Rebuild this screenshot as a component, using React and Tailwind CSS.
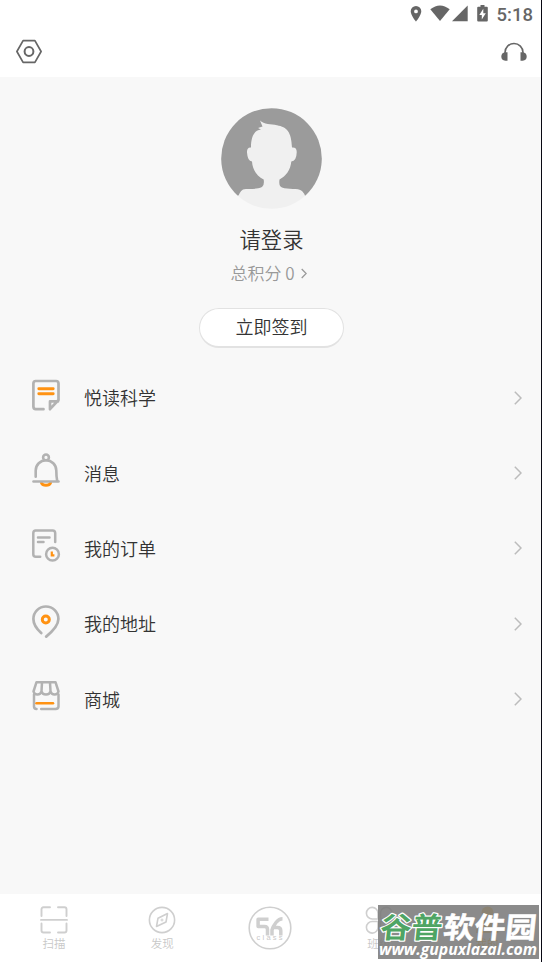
import React, { useState } from "react";

const menuItems = [
  { id: "reading", label: "悦读科学", Icon: NoteIcon },
  { id: "message", label: "消息", Icon: BellIcon },
  { id: "orders", label: "我的订单", Icon: OrderIcon },
  { id: "address", label: "我的地址", Icon: PinIcon },
  { id: "mall", label: "商城", Icon: ShopIcon },
];

function StatusBar() {
  return (
    <div className="flex h-[27px] items-center justify-end pr-[9px] text-[#666]">
      <svg className="mr-[8px] h-[17px] w-[12px]" viewBox="0 0 11 17" fill="currentColor">
        <path
          fillRule="evenodd"
          d="M5.5 1A5.3 5.3 0 0 0 .2 6.300C.2 10.200 5.500 16.700 5.500 16.700S10.800 10.200 10.800 6.300A5.300 5.300 0 0 0 5.500 1Zm0 3.500a1.900 1.900 0 1 1 0 3.800 1.900 1.900 0 0 1 0-3.800Z"
        />
      </svg>
      <svg className="mr-[2px] h-[17px] w-[20px]" viewBox="0 0 20 17" fill="currentColor">
        <path d="M.3 4.300Q10-3.300 19.700 4.300L10 16Z" />
      </svg>
      <svg className="mr-[9px] h-[17px] w-[16px]" viewBox="0 0 16 17" fill="currentColor">
        <path d="M15.700.500V16.200H0Z" />
      </svg>
      <svg className="mr-[9px] h-[17px] w-[11px]" viewBox="0 0 11 17" fill="currentColor">
        <path
          fillRule="evenodd"
          d="M3.500 0h4v1.700h2.300q1 0 1 1v12.800q0 1-1 1H1.200q-1 0-1-1V2.700q0-1 1-1h2.300ZM6.300 3.800 2.300 10h2.500v4.500L8.800 8.300H6.300Z"
        />
      </svg>
      <span className="pt-[3px] font-[Roboto,sans-serif] text-[18.5px] leading-none font-medium">5:18</span>
    </div>
  );
}

function Header() {
  return (
    <header className="h-[77px] bg-white">
      <StatusBar />
      <div className="flex h-[50px] items-center justify-between pr-[15px] pl-4 text-[#666]">
        <button>
          <svg className="h-[26px] w-[26px]" viewBox="0 0 26 26" fill="none" stroke="currentColor" strokeWidth="1.7" strokeLinejoin="round">
            <path d="M7.100 1.700h11.800L25.100 12.500l-6.200 10.800H7.100L.900 12.500Z" />
            <circle cx="13" cy="12.500" r="4.400" strokeWidth="2" />
          </svg>
        </button>
        <button>
          <svg className="h-[26px] w-[26px]" viewBox="0 0 26 26">
            <path d="M4 16V13.500a9 9 0 0 1 18 0V16" fill="none" stroke="currentColor" strokeWidth="1.600" />
            <path d="M6.500 13.200v8.500H4.300Q.300 21.200.300 17.500T4.300 13.200ZM19.500 13.200v8.500h2.200q4-.500 4-4.200t-4-4.300Z" fill="currentColor" />
          </svg>
        </button>
      </div>
    </header>
  );
}

function Avatar() {
  return (
    <svg className="h-[101px] w-[101px]" viewBox="0 0 101 101">
      <defs>
        <clipPath id="avatarClip">
          <circle cx="50.500" cy="50.500" r="50.300" />
        </clipPath>
      </defs>
      <path d="M16.500 87.500A50.300 50.300 0 1 1 84.500 87.500Z" fill="#9b9b9b" />
      <path
        clipPath="url(#avatarClip)"
        fill="#f0f0f0"
        d="M39 12.500C43 16.500 50 16 56 17.200C66 19 70.500 24 71 39.500Q76 39 75.700 44.500Q75.500 53 70.300 53.500C69.500 62 65 68 58.500 71.500Q57.500 78 61 79.500C67 82 77 79.500 81 83Q84 85.500 84.500 90V101H17V90Q18 84 22 81.500C27 80 36 82 41 79Q43.500 77.500 42.700 71.500C36 68 31.500 62 31 53.500Q26.500 53 26 44.500Q25.800 39 30 39.500C30 29 33 22 40 21.500L37 20L41.500 18.500Z"
      />
    </svg>
  );
}

function NoteIcon() {
  return (
    <svg className="h-8 w-7" viewBox="0 0 28 32" fill="none" stroke="#b2b2b2" strokeWidth="2.700" strokeLinecap="round" strokeLinejoin="round">
      <path d="M11.500 30.200H3.800Q1.400 30.200 1.400 27.600V4.600Q1.400 2 3.800 2H24Q26.500 2 26.500 4.600V21L18 30.200V22.400H26" />
      <path d="M6.800 9.700H21.200M6.800 14.700H21.200" stroke="#ff9212" strokeWidth="2.900" />
    </svg>
  );
}

function BellIcon() {
  return (
    <svg className="h-8 w-7 overflow-visible" viewBox="0 0 28 32" fill="none" stroke="#b2b2b2" strokeWidth="2.600" strokeLinecap="round">
      <path d="M9.500 29Q10.500 31.300 14 31.300T18.500 29" stroke="#ff9212" strokeWidth="3" />
      <path d="M3.700 22.700V16.500A10.300 10.300 0 0 1 24.300 16.500Q24.300 22.500 25.200 27" />
      <circle cx="14" cy="3.400" r="2.900" />
      <path d="M1.500 27.500H26.500" />
    </svg>
  );
}

function OrderIcon() {
  return (
    <svg className="h-8 w-7 overflow-visible" viewBox="0 0 28 32" fill="none" stroke="#b2b2b2" strokeWidth="2.500" strokeLinecap="round">
      <path d="M8.200 27.800H3.800Q1.300 27.800 1.300 25.300V4.100Q1.300 1.500 3.800 1.500H20.500Q23.200 1.500 23.200 4.100V13" />
      <path d="M6 8.600H17.500M6 13H11.500" />
      <circle cx="20.500" cy="25.200" r="6.400" />
      <path d="M19.800 22.500V26.400H22.400" stroke="#ff9212" strokeWidth="2.200" strokeLinecap="butt" />
    </svg>
  );
}

function PinIcon() {
  return (
    <svg className="h-[34px] w-7" viewBox="0 0 28 34" fill="none" stroke="#b2b2b2" strokeWidth="2.700" strokeLinecap="round">
      <path d="M9.200 29Q1.400 22 1.400 15A12.500 12.500 0 0 1 26.400 15Q26.400 22.500 14.200 32.600" />
      <circle cx="13.800" cy="15.500" r="3.500" stroke="#ff9212" strokeWidth="3" />
    </svg>
  );
}

function ShopIcon() {
  return (
    <svg className="h-8 w-7" viewBox="0 0 28 32" fill="none" stroke="#b2b2b2" strokeWidth="2.500" strokeLinecap="round" strokeLinejoin="round">
      <path d="M4.500 2.200H23.500L26.500 11.500Q25.500 14.700 22.500 14.500Q19.500 14.300 18.500 11.300Q17.800 14.500 14 14.500T9.500 11.300Q8.500 14.300 5.500 14.500Q2.500 14.700 1.500 11.500ZM10 2.500 9.500 11.300M18 2.500 18.500 11.300" />
      <path d="M2 14.500V26.500Q2 28.900 4.500 28.900M9.200 28.900H23.500Q26.500 28.900 26.500 26.500V14.500" />
      <path d="M4.500 23.200H21" stroke="#ff9212" strokeWidth="2.500" />
    </svg>
  );
}

function ScanIcon() {
  return (
    <svg className="h-7 w-7" viewBox="0 0 28 28" fill="none" stroke="#cfcfcf" strokeWidth="1.900" strokeLinecap="round">
      <path d="M1.500 10V3.300Q1.500 1.300 3.500 1.300H10M18 1.300H24.500Q26.500 1.300 26.500 3.300V10M26.500 17.500V24.500Q26.500 26.500 24.500 26.500H18M10 26.500H3.500Q1.500 26.500 1.500 24.500V17.500M1 13.900H27" />
    </svg>
  );
}

function CompassIcon() {
  return (
    <svg className="h-7 w-7" viewBox="0 0 28 28" fill="none" stroke="#cfcfcf" strokeWidth="1.600" strokeLinejoin="round">
      <circle cx="14" cy="14" r="12.600" />
      <path d="M19.500 7.500 18 16 8.500 20.500 10 12.200Z" />
      <circle cx="14" cy="14" r="1" strokeWidth="1" />
    </svg>
  );
}

function CloverIcon() {
  return (
    <svg className="h-7 w-7" viewBox="0 0 28 28" fill="none" stroke="#cfcfcf" strokeWidth="1.600">
      <path d="M13 13H7.500A5.800 5.800 0 1 1 13 7.500ZM15.500 13V7.500A5.800 5.800 0 1 1 21 13ZM13 15.500V21A5.800 5.800 0 1 1 7.500 15.500ZM15.500 15.500H21A5.800 5.800 0 1 1 15.500 21Z" />
    </svg>
  );
}

function UserIcon() {
  return (
    <svg className="h-7 w-7" viewBox="0 0 28 28" fill="#ffc95c">
      <circle cx="14.500" cy="6.500" r="6" />
      <path d="M14 12.500 19 15Q25 18 25.500 27H3Q3.500 18 9.500 15Z" />
    </svg>
  );
}

// Round "56 class" badge in the middle of the tab bar
function ClassLogo() {
  return (
    <svg className="h-11 w-11" viewBox="0 0 44 44" fill="none" stroke="#cfcfcf">
      <circle cx="22" cy="22" r="20.800" strokeWidth="1.600" />
      <path d="M20.500 13.200H10.100V20.500H16.500Q19.500 20.500 19.500 23.500V29.500" strokeWidth="3.500" strokeLinejoin="round" />
      <path d="M34.500 12.800Q31 12.800 28 16.500T24 24V29.500M25 21.500H29.500Q32.800 21.500 32.800 24.800V29.500" strokeWidth="3.500" />
      <text x="8.500" y="34" fontSize="7.500" textLength="26" fill="#c8c8c8" stroke="none" className="font-[Liberation_Sans,sans-serif]">
        class
      </text>
    </svg>
  );
}

const tabs = [
  { id: "scan", label: "扫描", Icon: ScanIcon },
  { id: "discover", label: "发现", Icon: CompassIcon },
  { id: "home", label: "", Icon: ClassLogo },
  { id: "class", label: "班级", Icon: CloverIcon },
  { id: "mine", label: "我的", Icon: UserIcon },
];

function TabBar() {
  const [active, setActive] = useState("mine");

  return (
    <nav className="grid h-[68px] grid-cols-5 bg-white pr-px">
      {tabs.map(({ id, label, Icon }) => (
        <button
          key={id}
          onClick={() => setActive(id)}
          className="flex flex-col items-center pt-[12px]"
        >
          <Icon />
          {label && (
            <span
              className={
                active === id
                  ? "mt-px text-[11.5px] leading-4 text-[#ffb92e]"
                  : "mt-px text-[11.5px] leading-4 text-[#c8c8c8]"
              }
            >
              {label}
            </span>
          )}
        </button>
      ))}
    </nav>
  );
}

function Watermark() {
  return (
    <div className="pointer-events-none absolute right-[3px] bottom-[3px] h-[54px] w-[161px] bg-[#777]/85">
      <svg className="h-full w-full overflow-visible" viewBox="0 0 161 54">
        <g fontSize="29" fontWeight="700" className="font-[Noto_Sans_CJK_SC,sans-serif]" transform="skewX(-6)" strokeLinejoin="round">
          <text x="5" y="32.500" textLength="62" lengthAdjust="spacingAndGlyphs" fill="#4fa564" stroke="#fff" strokeWidth="2.400" paintOrder="stroke">
            谷普
          </text>
          <text x="68" y="32.500" textLength="93" lengthAdjust="spacingAndGlyphs" fill="#fff" stroke="#fff" strokeWidth="0.5">
            软件园
          </text>
        </g>
        <text x="1" y="49.500" textLength="158" lengthAdjust="spacingAndGlyphs" fontSize="16" fontWeight="700" fontStyle="italic" fill="#fff" className="font-[Open_Sans,sans-serif]">
          www.gupuxlazal.com
        </text>
      </svg>
    </div>
  );
}

const App = () => {
  return (
    <div className="relative flex h-[962px] w-[542px] flex-col overflow-hidden bg-[#f8f8f8] font-[Noto_Sans_CJK_SC,sans-serif] font-[350] text-[#333]">
      <Header />
      <main className="flex flex-1 flex-col">
        <section className="flex flex-col items-center pt-[31px] pl-px">
          <Avatar />
          <h1 className="mt-[14px] text-[21.3px] leading-8">请登录</h1>
          <p className="mt-[6px] mr-[6px] flex items-center text-[17px] leading-6 text-[#999]">
            总积分 0
            <svg className="ml-[6px] h-[11px] w-[6px]" viewBox="0 0 6 11" fill="none" stroke="#999" strokeWidth="1.300">
              <path d="M.7 1 5.200 5.500.700 10" />
            </svg>
          </p>
          <button className="mt-[23px] h-10 w-[145px] rounded-full border border-b-2 border-[#e2e2e2] bg-white pb-[2px] text-[18px] leading-[35px]">
            立即签到
          </button>
        </section>

        <ul className="mt-[12px]">
          {menuItems.map(({ id, label, Icon }) => (
            <li key={id} className="flex h-[75.4px] items-center pr-5 pl-8">
              <div className="mb-[6px] w-[52px]">
                <Icon />
              </div>
              <span className="flex-1 text-[18px]">{label}</span>
              <svg className="h-[14px] w-[8px]" viewBox="0 0 8 14" fill="none" stroke="#bcbcbc" strokeWidth="1.500">
                <path d="M.8.800 7 7 .8 13.200" />
              </svg>
            </li>
          ))}
        </ul>
      </main>
      <TabBar />
      <Watermark />
      <div className="absolute inset-y-0 right-0 w-px bg-[#080812]" />
    </div>
  );
};

export default App;
